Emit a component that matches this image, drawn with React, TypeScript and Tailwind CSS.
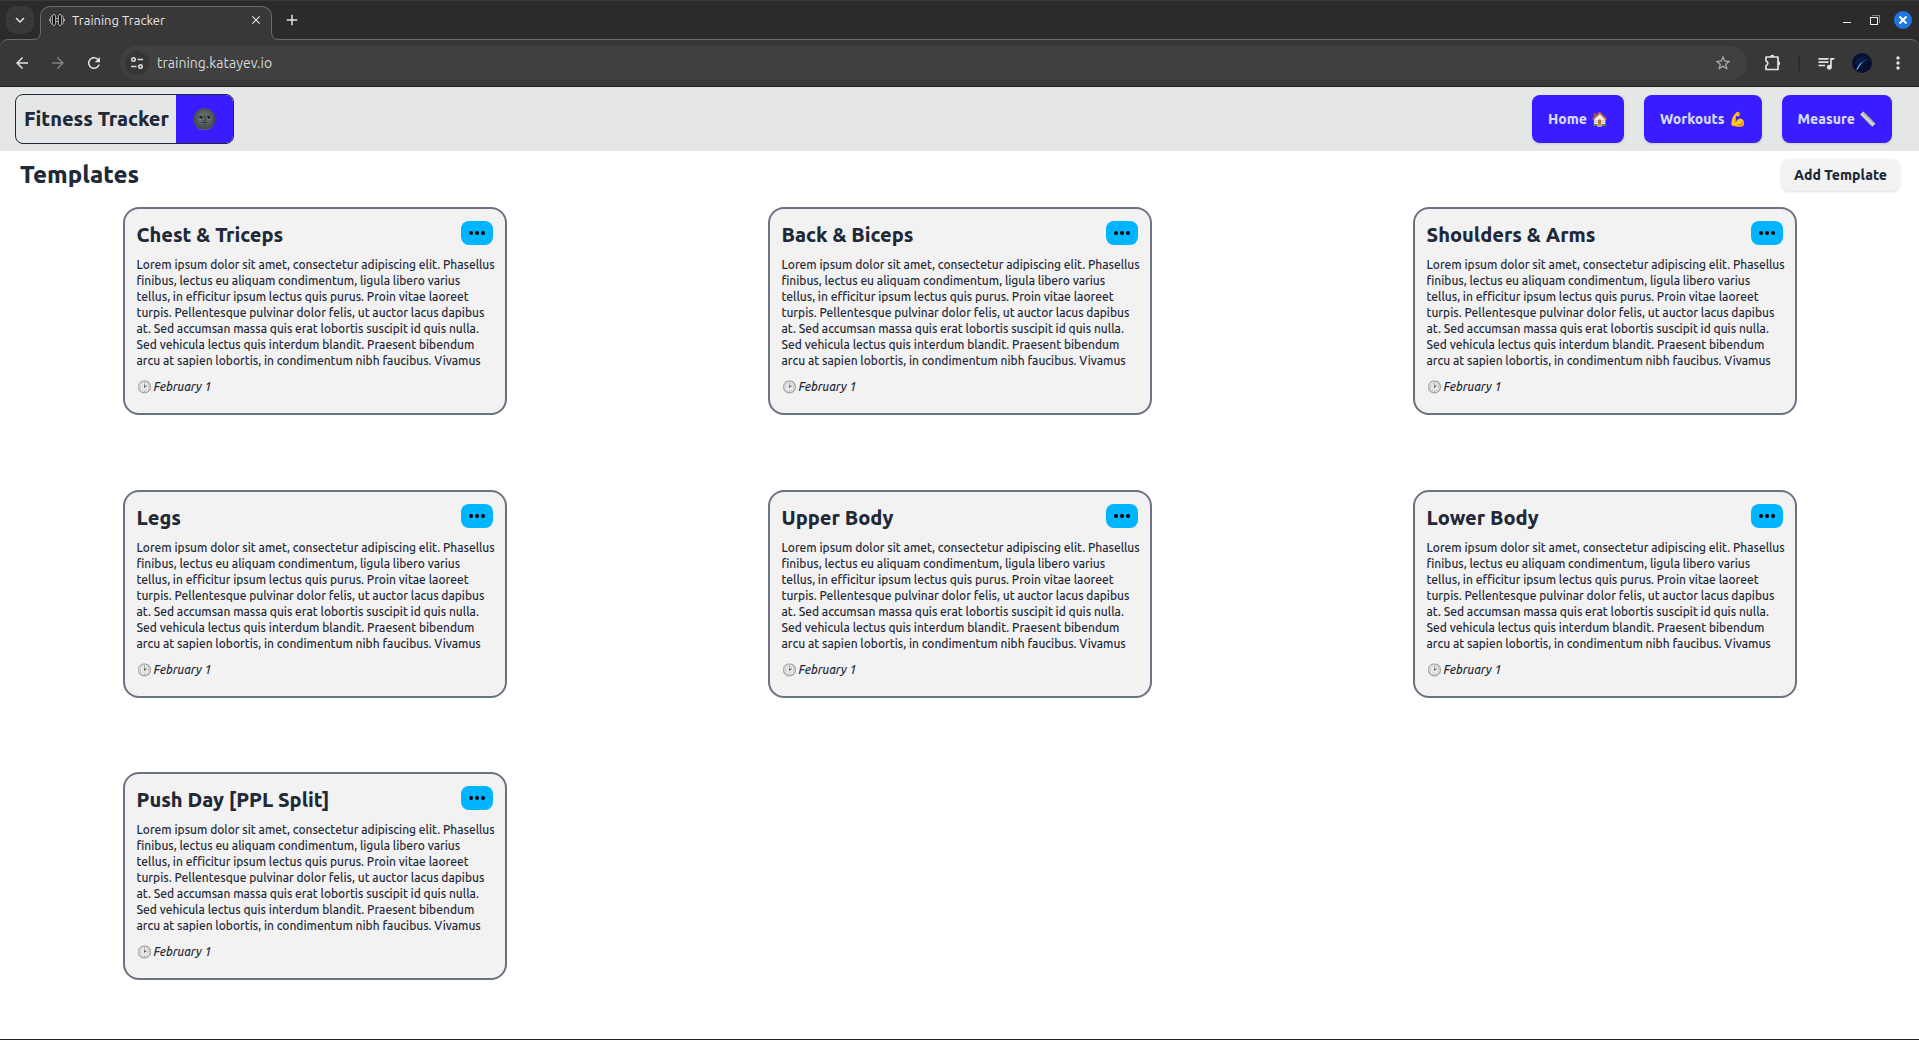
import React from 'react';
import {
  MdAdd,
  MdArrowBack,
  MdArrowForward,
  MdClose,
  MdKeyboardArrowDown,
  MdMoreVert,
  MdQueueMusic,
  MdRefresh,
  MdStarBorder,
} from 'react-icons/md';

const TEMPLATES = [
  'Chest & Triceps',
  'Back & Biceps',
  'Shoulders & Arms',
  'Legs',
  'Upper Body',
  'Lower Body',
  'Push Day [PPL Split]',
];

const DESCRIPTION = [
  'Lorem ipsum dolor sit amet, consectetur adipiscing elit. Phasellus',
  'finibus, lectus eu aliquam condimentum, ligula libero varius',
  'tellus, in efficitur ipsum lectus quis purus. Proin vitae laoreet',
  'turpis. Pellentesque pulvinar dolor felis, ut auctor lacus dapibus',
  'at. Sed accumsan massa quis erat lobortis suscipit id quis nulla.',
  'Sed vehicula lectus quis interdum blandit. Praesent bibendum',
  'arcu at sapien lobortis, in condimentum nibh faucibus. Vivamus',
];

function DumbbellIcon() {
  return (
    <svg width="16" height="16" viewBox="0 0 16 16" stroke="#a8a8a8" strokeWidth="1" aria-hidden="true">
      <rect x="5.500" y="6.500" width="5" height="3" fill="#383838" />
      <rect x="3.500" y="2.500" width="3" height="11" rx="1.500" fill="#111" />
      <rect x="9.500" y="2.500" width="3" height="11" rx="1.500" fill="#111" />
      <path d="M3.500 4C1.500 4 1.500 5 1.500 6v4c0 1 0 2 2 2zM12.500 4c2 0 2 1 2 2v4c0 1 0 2-2 2z" fill="#333" />
      <path d="M.5 7v2M15.500 7v2" />
    </svg>
  );
}

function SiteInfoIcon() {
  return (
    <svg width="14" height="14" viewBox="0 0 14 14" fill="none" stroke="#dcdcdc" strokeWidth="1.6" aria-hidden="true">
      <circle cx="3.500" cy="3.500" r="1.700" />
      <path d="M7.500 3.500h5.500M1 10.500h5.500" />
      <circle cx="10.500" cy="10.500" r="1.700" />
    </svg>
  );
}

function PuzzleIcon() {
  return (
    <svg width="18" height="18" viewBox="0 0 18 18" fill="none" stroke="#e3e3e3" strokeWidth="1.700" strokeLinejoin="round" aria-hidden="true">
      <path d="M2 3h12v12.500H2v-4a2.300 2.300 0 0 0 0-4.500z" />
      <path d="M6 3a2.200 2.200 0 0 1 4.400 0zM14 7a2.200 2.200 0 0 1 0 4.400z" fill="#e3e3e3" stroke="none" />
    </svg>
  );
}

function Avatar() {
  return (
    <svg width="20" height="20" viewBox="0 0 20 20" aria-hidden="true">
      <circle cx="10" cy="10" r="10" fill="#07102f" />
      <path d="M3 8Q8 3 15 3Q8 7 5 13Z" fill="#0a1c4c" />
      <path d="M4 17C6 11 10 7 17 5.500C11 8.500 8 12 6 16Z" fill="#174a85" />
      <path d="M4.500 17C6 13 8 10.500 10.500 9C8.500 11.500 7 14 5.500 16.500Z" fill="#7cc4ec" />
    </svg>
  );
}

function TabStrip() {
  return (
    <div className="flex h-[39px] items-start border-t border-[#3a3a3a] bg-[#2b2b2b] pt-[5px] pl-[6px]">
      <button aria-label="Search tabs" className="flex size-7 shrink-0 items-center justify-center rounded-[10px] bg-[#383838] text-[#e3e3e3]">
        <MdKeyboardArrowDown size={18} />
      </button>
      <div className="relative z-10 ml-[6px] flex h-[34px] w-[232px] items-start rounded-t-[10px] border border-b-0 border-[#6c6c6c] bg-[#383838] px-2 pt-1">
        <svg className="absolute -left-2 bottom-0" width="8" height="8" viewBox="0 0 8 8" aria-hidden="true">
          <path d="M8 0v8H0v-.5Q7.500 7.500 7.500 0z" fill="#383838" />
          <path d="M0 7.500Q7.500 7.500 7.500 0" fill="none" stroke="#6c6c6c" />
        </svg>
        <svg className="absolute -right-2 bottom-0" width="8" height="8" viewBox="0 0 8 8" aria-hidden="true">
          <path d="M0 0v8h8v-.5Q.5 7.500 .5 0z" fill="#383838" />
          <path d="M8 7.500Q.5 7.500 .5 0" fill="none" stroke="#6c6c6c" />
        </svg>
        <div className="flex h-[18px] flex-1 items-center gap-[7px]">
          <DumbbellIcon />
          <span className="flex-1 text-[13px] leading-[18px] text-[#e6e6e6]">Training Tracker</span>
          <button aria-label="Close tab" className="text-[#e3e3e3]">
            <MdClose size={14} />
          </button>
        </div>
      </div>
      <button aria-label="New tab" className="ml-[11px] flex h-7 items-center text-[#e3e3e3]">
        <MdAdd size={18} />
      </button>
      <div className="ml-auto flex h-7 items-center pr-[7px]">
        <button aria-label="Minimize" className="mr-[19px] flex h-4 items-center pt-1">
          <span className="h-px w-2 bg-[#f0f0f0]" />
        </button>
        <button aria-label="Restore" className="mr-[14px]">
          <svg width="10" height="10" viewBox="0 0 10 10" fill="none" aria-hidden="true">
            <path d="M2 .5h7.500V8" stroke="#858585" />
            <rect x=".5" y="2.500" width="7" height="7" stroke="#f0f0f0" />
          </svg>
        </button>
        <button aria-label="Close window" className="flex size-[18px] items-center justify-center rounded-full bg-[#1f76dc]">
          <svg width="8" height="8" viewBox="0 0 8 8" stroke="#fff" strokeWidth="2" aria-hidden="true">
            <path d="M.5 .5l7 7M7.500 .5l-7 7" />
          </svg>
        </button>
      </div>
    </div>
  );
}

function Toolbar() {
  return (
    <div className="bg-[#2b2b2b]">
      <div className="flex h-12 items-center rounded-t-lg border-t border-b border-t-[#6c6c6c] border-b-[#202020] bg-[#383838] pr-[11px] pl-[13px]">
        <div className="flex items-center gap-[18px] text-[#e3e3e3]">
          <button aria-label="Back"><MdArrowBack size={18} /></button>
          <button aria-label="Forward" className="text-[#808080]"><MdArrowForward size={18} /></button>
          <button aria-label="Reload"><MdRefresh size={18} /></button>
        </div>
        <div className="ml-[17px] flex h-[34px] flex-1 items-center rounded-full bg-[#404040] pr-[15px] pl-[5px]">
          <button aria-label="Site information" className="flex size-6 items-center justify-center rounded-full bg-[#363636]">
            <SiteInfoIcon />
          </button>
          <input
            aria-label="Address"
            defaultValue="training.katayev.io"
            className="ml-2 h-6 flex-1 bg-transparent text-sm text-[#d8d8d8] outline-none"
          />
          <button aria-label="Bookmark" className="text-[#b0b0b0]"><MdStarBorder size={18} /></button>
        </div>
        <div className="flex items-center pl-[17px] text-[#e3e3e3]">
          <button aria-label="Extensions"><PuzzleIcon /></button>
          <span className="mx-4 h-4 w-0.5 bg-[#2b2b2b]" />
          <button aria-label="Media"><MdQueueMusic size={20} /></button>
          <button aria-label="Profile" className="ml-4"><Avatar /></button>
          <button aria-label="Menu" className="ml-4"><MdMoreVert size={20} /></button>
        </div>
      </div>
    </div>
  );
}

function NavLink({ label, emoji, gray }: { label: string; emoji: string; gray?: boolean }) {
  return (
    <a href="#" className="flex h-12 items-center gap-1 rounded-lg bg-[#391cff] px-4 text-sm font-extrabold text-[#d3dbff] shadow-sm">
      <span>{label}</span>
      <span className={gray ? 'grayscale' : undefined}>{emoji}</span>
    </a>
  );
}

function Header() {
  return (
    <header className="flex h-16 items-center justify-between bg-[#e5e6e6] pr-[27px] pl-[15px]">
      <div className="flex h-[50px] overflow-hidden rounded-lg border border-[#1f2937]">
        <a href="#" className="flex items-center pr-[7px] pl-2 text-xl font-extrabold">Fitness Tracker</a>
        <button aria-label="Toggle theme" className="flex w-[57px] items-center justify-center bg-[#391cff] text-xl">
          <span className="brightness-75 grayscale-75">🌚</span>
        </button>
      </div>
      <nav className="flex items-center gap-5">
        <NavLink label="Home" emoji="🏠" />
        <NavLink label="Workouts" emoji="💪" />
        <NavLink label="Measure" emoji="📏" gray />
      </nav>
    </header>
  );
}

function TemplateCard({ title }: { title: string }) {
  return (
    <article className="h-52 w-96 rounded-2xl border-2 border-[#6b7280] bg-[#f2f2f2] p-3">
      <div className="flex items-start justify-between">
        <h2 className="text-xl leading-7 font-extrabold">{title}</h2>
        <button aria-label={`Options for ${title}`} className="flex h-6 w-8 items-center justify-center gap-0.5 rounded-lg bg-[#00b5ff]">
          <span className="size-1 rounded-full bg-black" />
          <span className="size-1 rounded-full bg-black" />
          <span className="size-1 rounded-full bg-black" />
        </button>
      </div>
      <p className="mt-2 text-xs font-medium whitespace-nowrap">
        {DESCRIPTION.map((line) => (
          <React.Fragment key={line}>
            {line}
            <br />
          </React.Fragment>
        ))}
      </p>
      <p className="mt-2.5 flex items-center gap-0.5 text-xs font-medium">
        <span className="brightness-90 grayscale">🕑</span>
        <time dateTime="02-01" className="italic">February 1</time>
      </p>
    </article>
  );
}

export default function App() {
  return (
    <div className="flex min-h-screen flex-col border-b border-[#202020] bg-white font-['Ubuntu','Noto_Sans',sans-serif] text-[#1f2937]">
      <TabStrip />
      <Toolbar />
      <Header />
      <main className="flex flex-1 flex-col">
        <div className="flex h-14 items-center justify-between pt-2 pr-[19px] pb-4 pl-5">
          <h1 className="text-2xl font-extrabold">Templates</h1>
          <button className="h-8 rounded-lg bg-[#f2f2f2] px-[13px] text-sm font-extrabold shadow-sm">Add Template</button>
        </div>
        <div className="grid flex-1 grid-cols-3 justify-items-center gap-4">
          {TEMPLATES.map((title) => (
            <TemplateCard key={title} title={title} />
          ))}
        </div>
      </main>
    </div>
  );
}
